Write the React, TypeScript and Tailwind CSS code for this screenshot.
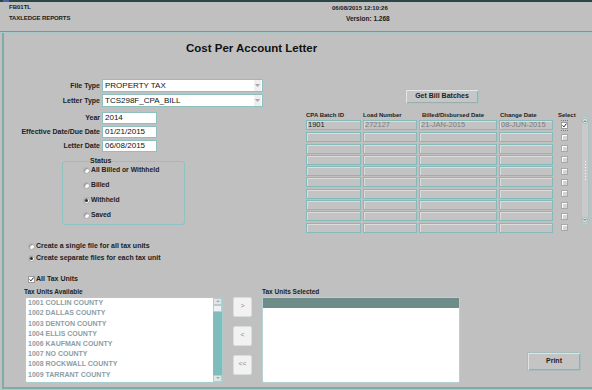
const statuses = [
  { label: "All Billed or Withheld", on: false },
  { label: "Billed", on: false },
  { label: "Withheld", on: true },
  { label: "Saved", on: false },
];

const units = [
  "1001 COLLIN COUNTY",
  "1002 DALLAS COUNTY",
  "1003 DENTON COUNTY",
  "1004 ELLIS COUNTY",
  "1006 KAUFMAN COUNTY",
  "1007 NO COUNTY",
  "1008 ROCKWALL COUNTY",
  "1009 TARRANT COUNTY",
];

const batches = [
  { id: "1901", load: "272127", billed: "21-JAN-2015", changed: "08-JUN-2015", on: true },
  ...Array.from({ length: 9 }, () => ({ id: "", load: "", billed: "", changed: "", on: false })),
];

const Radio = ({ on }: { on?: boolean }) => (
  <span className="w-[7px] h-[7px] rounded-full bg-white border border-[#a8a8a8] shadow-[inset_1px_1px_1px_#8a8a8a] flex items-center justify-center shrink-0">
    {on && <span className="w-[3px] h-[3px] rounded-full bg-[#1f2f2f]" />}
  </span>
);

const Check = ({ on, dim }: { on?: boolean; dim?: boolean }) => (
  <span
    className={
      dim
        ? "w-[7px] h-[7px] bg-[#d4d4d4] border border-[#a8a8a8] shadow-[inset_1px_1px_0_#fff] shrink-0 flex items-center justify-center"
        : "w-[7px] h-[7px] bg-white border border-[#9a9a9a] shrink-0 flex items-center justify-center"
    }
  >
    {on && (
      <svg width="7" height="7" viewBox="0 0 7 7">
        <path d="M0.8 3.4 L2.7 5.4 L6.4 0.8" fill="none" stroke="#1a1a1a" strokeWidth="1.4" />
      </svg>
    )}
  </span>
);

const Select = ({ value }: { value: string }) => (
  <div className="w-[161px] h-[13px] ml-[2px] bg-white border border-[#8fbfbf] flex items-center">
    <span className="flex-1 pl-[2px] text-[8px] text-[#111]">{value}</span>
    <span className="w-[7px] h-[11px] mr-px bg-[#efefef] flex items-center justify-center">
      <svg width="5" height="3" viewBox="0 0 5 3">
        <path d="M0 0 H5 L2.5 3 Z" fill="#a8a8a8" />
      </svg>
    </span>
  </div>
);

const TextBox = ({ value }: { value: string }) => (
  <div className="w-[55px] h-[12px] ml-[2px] bg-white border border-[#8fbfbf] flex items-center pl-[2px] text-[8px] text-[#111]">
    {value}
  </div>
);

const Label = ({ children }: { children: string }) => (
  <span className="w-[96px] text-right text-[7px] font-bold text-[#222] leading-[8px]">{children}</span>
);

const Cell = ({ w, text, dark }: { w: string; text: string; dark?: boolean }) => (
  <div
    className={`${w} h-[10px] border border-[#86baba] bg-[#c3c3c3] shadow-[inset_1px_1px_0_#dcdcdc] flex items-center pl-px text-[7.5px] leading-[8px] ${
      dark ? "text-[#1a1a1a]" : "text-[#7c7c7c]"
    }`}
  >
    {text}
  </div>
);

const SmallBtn = ({ children }: { children: string }) => (
  <button className="w-[19px] h-[20px] bg-[#f2f2f2] border border-[#d6dede] rounded-[2px] text-[7px] text-[#8a8a8a] flex items-center justify-center">
    {children}
  </button>
);

export default function App() {
  return (
    <div className="w-[592px] h-[390px] bg-[#c0c0c0] overflow-hidden flex flex-col font-['Liberation_Sans',Arial,sans-serif]">
      {/* window strip */}
      <div className="h-[2px] bg-[#2c4646] flex">
        <span className="w-[6px] h-[2px] ml-[3px] bg-[#4a5fa8]" />
      </div>

      {/* header */}
      <div className="h-[29px] flex text-[6px] font-bold text-[#1a1a1a] leading-[8px]">
        <div className="w-[332px] pl-[9px] pt-[1px] flex flex-col gap-[3px]">
          <span>FB01TL</span>
          <span className="tracking-[-0.1px]">TAXLEDGE REPORTS</span>
        </div>
        <div className="pt-[2px] flex flex-col gap-[3px]">
          <span>06/08/2015 12:10:26</span>
          <span className="pl-[14px] text-[6.5px]">Version: 1.268</span>
        </div>
      </div>
      <div className="h-[2px] bg-[#6f9c9c] border-b border-[#a8c8c8]" />

      {/* main panel */}
      <div className="h-[356px] ml-[2px] border-l-2 border-b-2 border-[#7fabab] flex flex-col">
        <div className="mt-[8px] h-[14px] pl-[182px] text-[11.5px] font-bold text-[#111] leading-[14px]">
          Cost Per Account Letter
        </div>

        <div className="mt-[24px] flex">
          {/* form */}
          <div className="w-[296px] flex flex-col">
            <div className="flex items-center h-[13px]">
              <Label>File Type</Label>
              <Select value="PROPERTY TAX" />
            </div>
            <div className="flex items-center h-[13px] mt-[2px]">
              <Label>Letter Type</Label>
              <Select value="TCS298F_CPA_BILL" />
            </div>
            <div className="flex items-center h-[12px] mt-[5px]">
              <Label>Year</Label>
              <TextBox value="2014" />
            </div>
            <div className="flex items-center h-[12px] mt-[2px]">
              <Label>Effective Date/Due Date</Label>
              <TextBox value="01/21/2015" />
            </div>
            <div className="flex items-center h-[12px] mt-[2px]">
              <Label>Letter Date</Label>
              <TextBox value="06/08/2015" />
            </div>

            <fieldset className="mt-[5px] ml-[58px] w-[123px] border border-[#8fc2c2] rounded-[3px] pl-[20px] pb-[4px] flex flex-col gap-[5px]">
              <legend className="ml-[6px] px-px text-[7px] font-bold text-[#222] leading-[8px]">Status</legend>
              {statuses.map((s) => (
                <div key={s.label} className="h-[10px] flex items-center gap-px text-[6.8px] font-bold text-[#222]">
                  <Radio on={s.on} />
                  <span>{s.label}</span>
                </div>
              ))}
            </fieldset>
          </div>

          {/* batches */}
          <div className="pl-[6px] flex flex-col">
            <button className="mt-[10px] ml-[99px] w-[74px] h-[15px] bg-[#c6c6c6] border border-[#a9c6c6] shadow-[inset_1px_1px_0_#e6e6e6,inset_-1px_-1px_0_#9aaeae] text-[7px] font-bold text-[#222]">
              Get Bill Batches
            </button>
            <div className="flex">
              <div className="flex flex-col">
                <div className="mt-[7px] h-[8px] flex gap-[2px] text-[6px] font-bold text-[#222] leading-[8px]">
                  <span className="w-[55px]">CPA Batch ID</span>
                  <span className="w-[54px]">Load Number</span>
                  <span className="w-[78px] pl-[3px]">Billed/Disbursed Date</span>
                  <span className="w-[54px] pl-px">Change Date</span>
                  <span className="w-[26px] pl-[3px]">Select</span>
                </div>
                <div className="mt-px flex flex-col gap-[1.3px]">
                  {batches.map((b, i) => (
                    <div key={i} className="flex gap-[2px]">
                      <Cell w="w-[55px]" text={b.id} dark />
                      <Cell w="w-[54px]" text={b.load} />
                      <Cell w="w-[78px]" text={b.billed} />
                      <Cell w="w-[54px]" text={b.changed} />
                      <div className="w-[26px] pl-[6px] flex items-center">
                        {b.on ? (
                          <span className="border-y border-dotted border-[#777] py-px">
                            <Check on />
                          </span>
                        ) : (
                          <Check dim />
                        )}
                      </div>
                    </div>
                  ))}
                </div>
              </div>
              {/* scrollbar */}
              <div className="mt-[12px] w-[8px] h-[109px] bg-[#cacaca] border border-[#a9c4c4] rounded-[3px] flex flex-col items-center justify-between py-px">
                <span className="w-[6px] h-[6px] rounded-full bg-[#e8e8e8] border border-[#9fb8b8] flex items-center justify-center">
                  <svg width="4" height="2" viewBox="0 0 4 2">
                    <path d="M0 2 L2 0 L4 2 Z" fill="#7a9a9a" />
                  </svg>
                </span>
                <span className="flex flex-col gap-[2px] items-center">
                  {Array.from({ length: 7 }, (_, i) => (
                    <span key={i} className="w-px h-px bg-[#f4f4f4]" />
                  ))}
                </span>
                <span className="w-[6px] h-[6px] rounded-full bg-[#e8e8e8] border border-[#9fb8b8] flex items-center justify-center">
                  <svg width="4" height="2" viewBox="0 0 4 2">
                    <path d="M0 0 L4 0 L2 2 Z" fill="#7a9a9a" />
                  </svg>
                </span>
              </div>
            </div>
          </div>
        </div>

        {/* output options */}
        <div className="mt-[9px] ml-[24px] h-[10px] flex items-center gap-[1px] text-[7px] font-bold text-[#222]">
          <Radio />
          <span>Create a single file for all tax units</span>
        </div>
        <div className="mt-[2px] ml-[24px] h-[10px] flex items-center gap-[1px] text-[7px] font-bold text-[#222]">
          <Radio on />
          <span>Create separate files for each tax unit</span>
        </div>
        <div className="mt-[12px] ml-[24px] h-[8px] flex items-center gap-[1px] text-[7px] font-bold text-[#222]">
          <Check on />
          <span>All Tax Units</span>
        </div>

        {/* tax units */}
        <div className="mt-[4px] flex items-start">
          <div className="ml-[21px] w-[198px] flex flex-col">
            <span className="-ml-px h-[8px] text-[6.5px] font-bold text-[#222] leading-[8px]">Tax Units Available</span>
            <div className="mt-px h-[86px] bg-white border border-[#a9cccc] rounded-[2px] flex">
              <div className="flex-1 flex flex-col pt-[0.6px]">
                {units.map((u) => (
                  <span key={u} className="h-[10.2px] leading-[10.2px] pl-[2px] text-[7px] font-bold text-[#8b9ea6]">
                    {u}
                  </span>
                ))}
              </div>
              <div className="w-[9px] bg-[#7ebdbb] flex flex-col">
                <span className="h-[7px] bg-[#e4e4e4] border border-[#b8cccc] flex items-center justify-center">
                  <svg width="4" height="2" viewBox="0 0 4 2">
                    <path d="M0 2 L2 0 L4 2 Z" fill="#9ab0b0" />
                  </svg>
                </span>
                <span className="h-[7px] bg-[#f0f0f0] border border-[#b8cccc]" />
                <span className="flex-1" />
                <span className="h-[7px] bg-[#e4e4e4] border border-[#b8cccc] flex items-center justify-center">
                  <svg width="4" height="2" viewBox="0 0 4 2">
                    <path d="M0 0 L4 0 L2 2 Z" fill="#9ab0b0" />
                  </svg>
                </span>
              </div>
            </div>
          </div>

          <div className="ml-[10px] mt-[9px] flex flex-col gap-[9px]">
            <SmallBtn>&gt;</SmallBtn>
            <SmallBtn>&lt;</SmallBtn>
            <SmallBtn>&lt;&lt;</SmallBtn>
          </div>

          <div className="ml-[10px] w-[198px] flex flex-col">
            <span className="h-[8px] text-[6.5px] font-bold text-[#222] leading-[8px]">Tax Units Selected</span>
            <div className="mt-px h-[86px] bg-white border border-[#b6d2d2] rounded-[2px] flex flex-col">
              <div className="h-[10px] bg-[#6d8c8a]" />
            </div>
          </div>

          <button className="ml-[67px] mt-[64px] w-[54px] h-[19px] bg-[#c4c4c4] border border-[#a6bebe] shadow-[inset_1px_1px_0_#e2e2e2,inset_-1px_-1px_0_#98acac] text-[7px] font-bold text-[#222]">
            Print
          </button>
        </div>
      </div>
    </div>
  );
}
